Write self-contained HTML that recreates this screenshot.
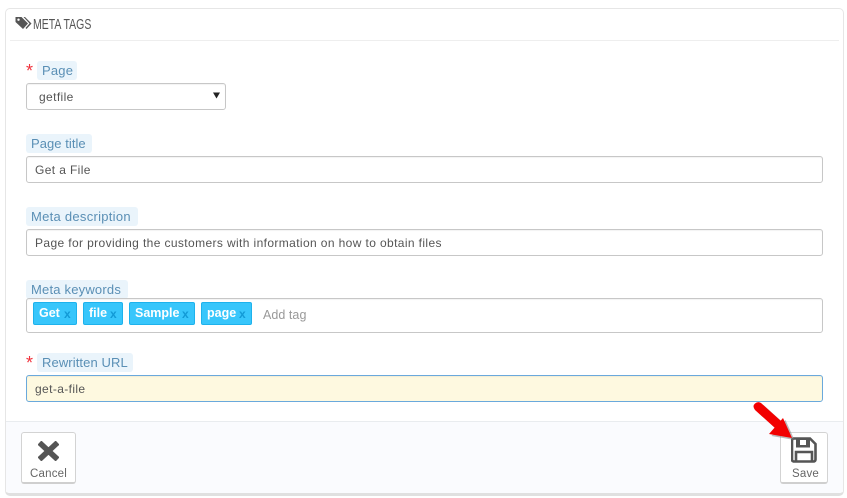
<!DOCTYPE html>
<html><head><meta charset="utf-8">
<style>
html,body{margin:0;padding:0;background:#fff;width:847px;height:498px;overflow:hidden;font-family:"Liberation Sans",sans-serif;}
div,span{position:absolute;box-sizing:border-box;white-space:nowrap;}
.panel{left:5px;top:8px;width:839px;height:488px;border:1px solid #e6e6e6;border-bottom:3px solid #e0e0e0;border-radius:5px;background:#fff;}
.hr{left:10px;top:40px;width:829px;height:1px;background:#eeeeee;}
.title{left:33px;top:16px;font-size:15px;line-height:18px;color:#555;transform:scaleX(.7);transform-origin:0 0;}
.lab{height:19px;background:#eaf4fb;border-radius:3px;color:#5a8fb5;font-size:13px;line-height:19px;padding:0 5px;letter-spacing:.2px;}
.star{color:#f0323c;font-size:18px;line-height:18px;left:26px;}
.inp{left:26px;width:797px;height:27px;border:1px solid #c7c7c7;border-radius:3px;background:#fff;color:#555;font-size:12px;line-height:26px;padding-left:8px;letter-spacing:.38px;box-shadow:inset 0 1px 1px rgba(0,0,0,.05);}
.tag{top:302px;height:23px;background:#38c6fb;border:1px solid #1eb2ec;border-radius:2px;color:#fff;font-size:12.5px;font-weight:bold;line-height:21px;padding-left:5px;}
.tag i{position:absolute;top:1px;font-style:normal;color:#129ad6;font-size:12px;font-weight:bold;}
.footer{left:6px;top:421px;width:837px;height:72px;background:#fafbfe;border-top:1px solid #e9ecef;border-radius:0 0 4px 4px;}
.btn{top:432px;height:52px;background:#fff;border:1px solid #d3d3d3;border-bottom:2px solid #cfcfcf;border-radius:3px;}
.btxt{font-size:11.5px;color:#666;line-height:14px;top:467px;letter-spacing:.2px;}
</style></head><body>
<div class="panel"></div>
<div class="hr"></div>
<svg style="position:absolute;left:15px;top:16px" width="17" height="14" viewBox="0 0 17 14"><path d="M.5 1h6l6.500 6.500-5 5.500-7.500-7z" fill="#555"/><path d="M8.500 1h1.500l6.500 6.500-5 5.500-1-1 4-4.500z" fill="#555"/><circle cx="3.500" cy="3.700" r="1.200" fill="#fff"/></svg>
<div class="title">META TAGS</div>

<div class="star" style="top:62px">*</div>
<div class="lab" style="left:37px;top:61px;width:40px">Page</div>
<div class="inp" style="top:83px;width:200px;padding-left:12px">getfile</div>
<svg style="position:absolute;left:213px;top:92px" width="7" height="7" viewBox="0 0 7 7"><path d="M0 .5h7L3.500 6.500z" fill="#222"/></svg>

<div class="lab" style="left:26px;top:134px;width:66px;letter-spacing:.05px">Page title</div>
<div class="inp" style="top:156px">Get a File</div>

<div class="lab" style="left:26px;top:207px;width:112px;letter-spacing:.28px">Meta description</div>
<div class="inp" style="top:229px">Page for providing the customers with information on how to obtain files</div>

<div class="lab" style="left:26px;top:280px;width:102px">Meta keywords</div>
<div class="inp" style="top:298px;height:35px"></div>
<div class="tag" style="left:33px;width:44px">Get<i style="left:30px">x</i></div>
<div class="tag" style="left:83px;width:40px">file<i style="left:26px">x</i></div>
<div class="tag" style="left:129px;width:66px">Sample<i style="left:52px">x</i></div>
<div class="tag" style="left:201px;width:51px">page<i style="left:37px">x</i></div>
<div style="left:263px;top:307px;color:#999;font-size:12.5px;line-height:17px;letter-spacing:.05px">Add tag</div>

<div class="star" style="top:354px">*</div>
<div class="lab" style="left:37px;top:353px;width:96px;letter-spacing:.1px">Rewritten URL</div>
<div class="inp" style="top:375px;background:#fef9e0;border-color:#6aa9dc;">get-a-file</div>

<div class="footer"></div>
<div class="btn" style="left:21px;width:55px"></div>
<svg style="position:absolute;left:38px;top:441px" width="21" height="20" viewBox="0 0 21 20"><path d="M3.500 3.500l14 13" stroke="#555" stroke-width="5.600" stroke-linecap="square"/><path d="M17.500 3.500l-14 13" stroke="#555" stroke-width="5.600" stroke-linecap="square"/></svg>
<div class="btxt" style="left:30px">Cancel</div>

<div class="btn" style="left:780px;width:48px"></div>
<svg style="position:absolute;left:791px;top:437px" width="26" height="26" viewBox="0 0 26 26"><path d="M2.500 1.500h16.500l5.500 5.500v15.500a2 2 0 0 1-2 2h-20a2 2 0 0 1-1.500-2v-20z" fill="none" stroke="#555" stroke-width="2.600"/><path d="M5 2v8.500h14V2z" fill="#555"/><rect x="9" y="3" width="6" height="5" fill="#fff"/><path d="M5 24.500v-9.500h16v9.500" fill="none" stroke="#555" stroke-width="2.600"/></svg>
<div class="btxt" style="left:792px">Save</div>

<svg style="position:absolute;left:750px;top:400px" width="50" height="45" viewBox="0 0 50 45"><g fill="#777" fill-opacity=".5" transform="translate(2.500 2)"><path d="M5 10L11 3 31 21 25 28z"/><path d="M19 34L33 18 42 38z"/></g><path d="M5 10Q2 6 5 3.500 8 1 11 3L31 21 25 28z" fill="#f20000"/><path d="M19 34L33 18 42 38z" fill="#f20000"/></svg>
</body></html>
